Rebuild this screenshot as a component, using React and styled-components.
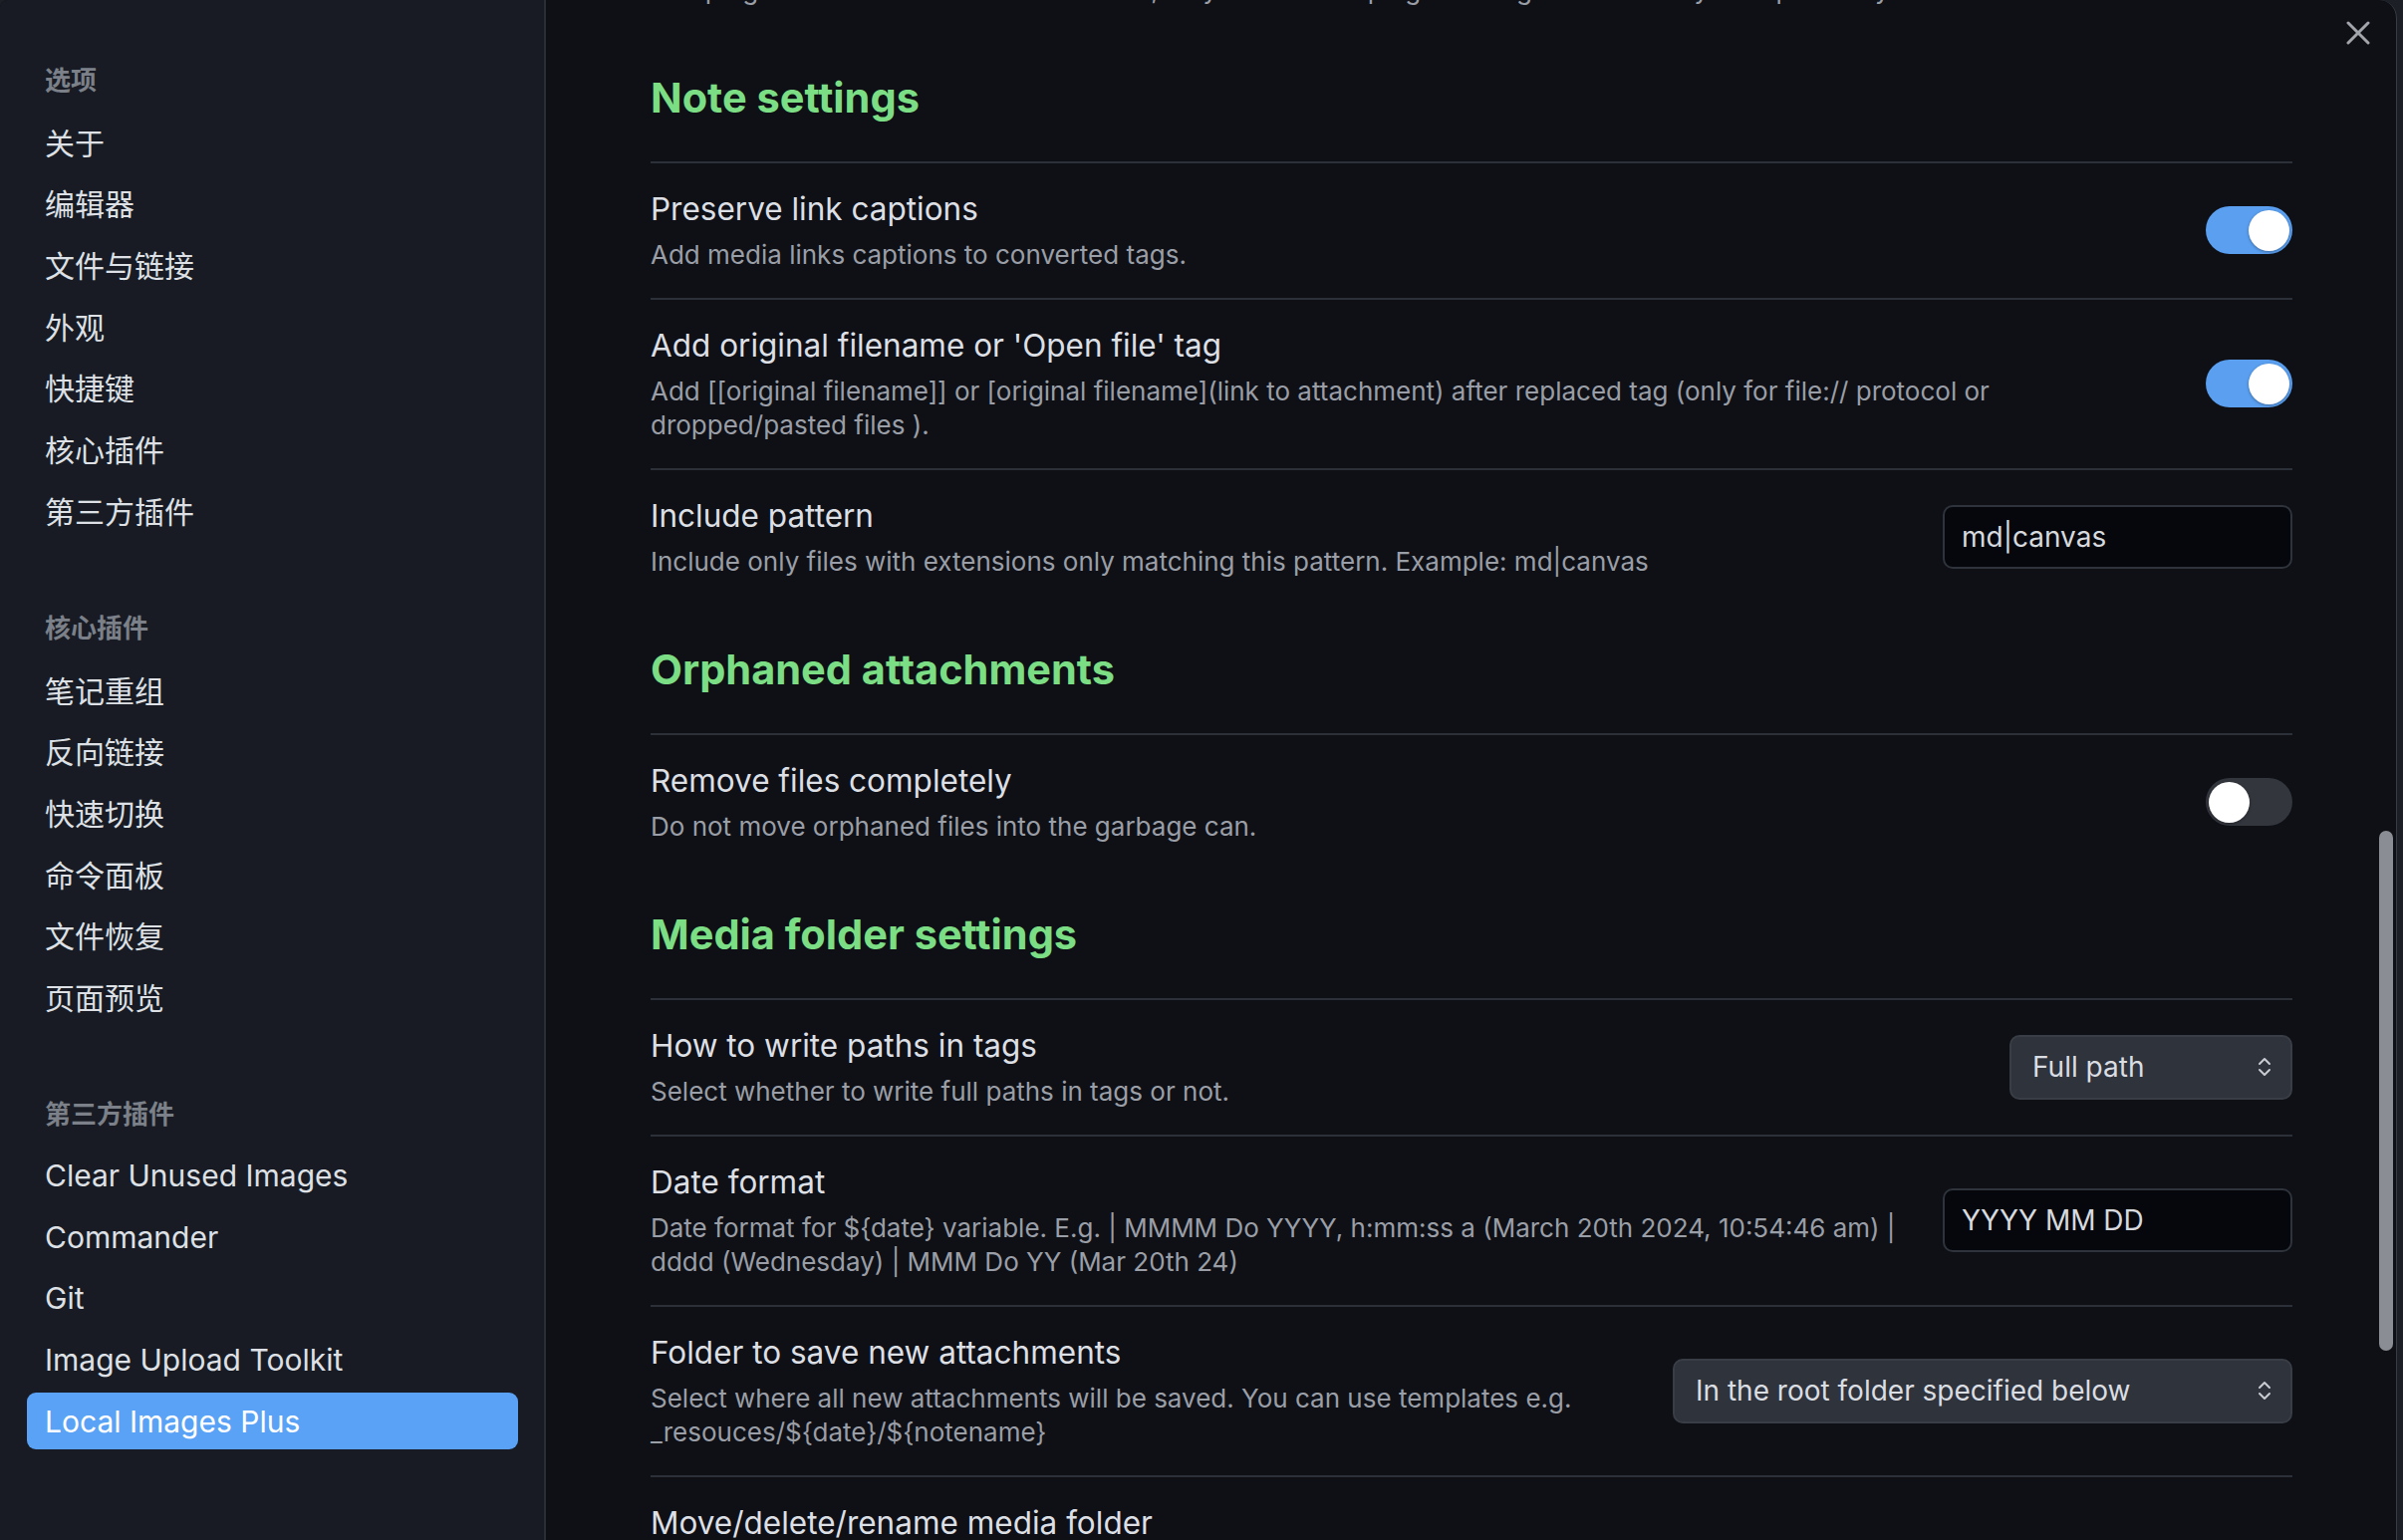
import React from 'react';
import styled, { createGlobalStyle } from 'styled-components';

const GlobalStyle = createGlobalStyle`
  html, body {
    margin: 0;
    padding: 0;
    height: 100%;
    overflow: hidden;
    background: #1c1f26;
  }
  #root { height: 100%; }
  *, *::before, *::after { box-sizing: border-box; }
  body {
    font-family: Inter, "Noto Sans CJK SC", sans-serif;
    -webkit-font-smoothing: antialiased;
  }
`;

const Page = styled.div`
  height: 100vh;
  display: flex;
`;

const Modal = styled.div`
  flex: 0 0 2406px;
  height: 100vh;
  display: flex;
  overflow: hidden;
  background: #0e1016;
  border-right: 1px solid #383c44;
  border-radius: 8px 18px 0 0;
`;

const Sidebar = styled.nav`
  flex: 0 0 548px;
  background: #181b23;
  border-right: 2px solid #2a2e37;
  padding: 58px 26px 0 27px;
`;

const Group = styled.div`
  & + & { margin-top: 68px; }
`;

const GroupTitle = styled.div`
  height: 40px;
  display: flex;
  align-items: center;
  padding-left: 18px;
  margin-bottom: 15px;
  font-size: 26px;
  font-weight: 600;
  color: #7b8089;
`;

const NavItem = styled.div`
  height: 57px;
  display: flex;
  align-items: center;
  padding-left: 18px;
  border-radius: 9px;
  font-size: 30px;
  color: ${p => (p.$active ? '#ffffff' : '#dde0e5')};
  background: ${p => (p.$active ? '#5aa2f6' : 'transparent')};
  & + & { margin-top: 4.7px; }
`;

const Main = styled.main`
  flex: 1;
  position: relative;
  overflow: hidden;
`;

const Content = styled.div`
  padding: 0 104px 0 105px;
  margin-top: -104px;
`;

const Heading = styled.h2`
  margin: 0;
  height: 129px;
  display: flex;
  align-items: center;
  font-size: 41.5px;
  font-weight: 650;
  color: #7bdd84;
`;

const Item = styled.div`
  display: flex;
  align-items: center;
  border-top: 2px solid #2c3038;
  padding: 26px 0 26.5px;
`;

const Info = styled.div`
  flex: 1 1 auto;
  margin-right: 32px;
  min-width: 0;
`;

const Name = styled.div`
  font-size: 31.5px;
  line-height: 39px;
  color: #dcdfe4;
`;

const Desc = styled.div`
  margin-top: 9.5px;
  font-size: 26px;
  line-height: 34px;
  color: #9a9ea6;
`;

const Control = styled.div`
  flex: 0 0 auto;
  display: flex;
  justify-content: flex-end;
`;

const Track = styled.div`
  width: 87px;
  height: 48px;
  border-radius: 24px;
  padding: 0 3px;
  display: flex;
  align-items: center;
  justify-content: ${p => (p.$on ? 'flex-end' : 'flex-start')};
  background: ${p => (p.$on ? '#5a9ff0' : '#33363d')};
`;

const Knob = styled.div`
  width: 41px;
  height: 41px;
  border-radius: 50%;
  background: #ffffff;
  box-shadow: 0 1px 3px rgba(0, 0, 0, 0.35);
`;

const TextInput = styled.input`
  width: 351px;
  height: 64px;
  background: #05070c;
  border: 2px solid #2f333b;
  border-radius: 10px;
  padding: 0 17px;
  font-family: inherit;
  font-size: 28px;
  color: #d6d9de;
  outline: none;
`;

const Select = styled.div`
  width: ${p => p.$width}px;
  height: 65px;
  background: #2f333b;
  border: 2px solid #393d46;
  border-radius: 10px;
  padding: 0 18px 0 21px;
  display: flex;
  align-items: center;
  justify-content: space-between;
  font-size: 28px;
  color: #dadde2;
`;

const CloseButton = styled.div`
  position: absolute;
  top: 21px;
  right: 26px;
  width: 24px;
  height: 24px;
  display: flex;
`;

const ScrollThumb = styled.div`
  position: absolute;
  right: 3px;
  top: 834px;
  width: 14px;
  height: 522px;
  border-radius: 7px;
  background: #8a8d93;
`;

const Toggle = ({ on }) => (
  <Track $on={on}>
    <Knob />
  </Track>
);

const Chevrons = () => (
  <svg width="16" height="24" viewBox="0 0 16 24" fill="none" stroke="#c9ccd2" strokeWidth="2" strokeLinecap="round" strokeLinejoin="round">
    <path d="M3 9 L8 4 L13 9" />
    <path d="M3 15 L8 20 L13 15" />
  </svg>
);

const Setting = ({ name, desc, children }) => (
  <Item>
    <Info>
      <Name>{name}</Name>
      <Desc>{desc}</Desc>
    </Info>
    {children && <Control>{children}</Control>}
  </Item>
);

const groups = [
  { title: '选项', items: ['关于', '编辑器', '文件与链接', '外观', '快捷键', '核心插件', '第三方插件'] },
  { title: '核心插件', items: ['笔记重组', '反向链接', '快速切换', '命令面板', '文件恢复', '页面预览'] },
  { title: '第三方插件', items: ['Clear Unused Images', 'Commander', 'Git', 'Image Upload Toolkit', 'Local Images Plus'] },
];

export default function App() {
  return (
    <>
      <GlobalStyle />
      <Page>
        <Modal>
          <Sidebar>
            {groups.map(g => (
              <Group key={g.title}>
                <GroupTitle>{g.title}</GroupTitle>
                {g.items.map(it => (
                  <NavItem key={it} $active={it === 'Local Images Plus'}>{it}</NavItem>
                ))}
              </Group>
            ))}
          </Sidebar>
          <Main>
            <Content>
              <Setting
                name="Process all new attachments"
                desc="The plugin will also move all attachments, only use it if the plugin settings are correctly set up already."
              >
                <Toggle on />
              </Setting>
              <Heading>Note settings</Heading>
              <Setting name="Preserve link captions" desc="Add media links captions to converted tags.">
                <Toggle on />
              </Setting>
              <Setting
                name="Add original filename or 'Open file' tag"
                desc="Add [[original filename]] or [original filename](link to attachment) after replaced tag (only for file:// protocol or dropped/pasted files )."
              >
                <Toggle on />
              </Setting>
              <Setting
                name="Include pattern"
                desc="Include only files with extensions only matching this pattern. Example: md|canvas"
              >
                <TextInput defaultValue="md|canvas" readOnly />
              </Setting>
              <Heading>Orphaned attachments</Heading>
              <Setting name="Remove files completely" desc="Do not move orphaned files into the garbage can.">
                <Toggle on={false} />
              </Setting>
              <Heading>Media folder settings</Heading>
              <Setting name="How to write paths in tags" desc="Select whether to write full paths in tags or not.">
                <Select $width={284}>
                  <span>Full path</span>
                  <Chevrons />
                </Select>
              </Setting>
              <Setting
                name="Date format"
                desc={'Date format for ${date} variable. E.g. | MMMM Do YYYY, h:mm:ss a (March 20th 2024, 10:54:46 am) | dddd (Wednesday) | MMM Do YY (Mar 20th 24)'}
              >
                <TextInput defaultValue="YYYY MM DD" readOnly />
              </Setting>
              <Setting
                name="Folder to save new attachments"
                desc={'Select where all new attachments will be saved. You can use templates e.g. _resouces/${date}/${notename}'}
              >
                <Select $width={622}>
                  <span>In the root folder specified below</span>
                  <Chevrons />
                </Select>
              </Setting>
              <Setting
                name="Move/delete/rename media folder"
                desc="Rename or move this folder to the obsidian or system garbage can. Also the media folder will be deleted when the note is removed."
              />
            </Content>
            <CloseButton>
              <svg width="24" height="24" viewBox="0 0 24 24" fill="none" stroke="#a2a5ac" strokeWidth="3" strokeLinecap="round">
                <path d="M2 2 L22 22" />
                <path d="M22 2 L2 22" />
              </svg>
            </CloseButton>
            <ScrollThumb />
          </Main>
        </Modal>
      </Page>
    </>
  );
}
